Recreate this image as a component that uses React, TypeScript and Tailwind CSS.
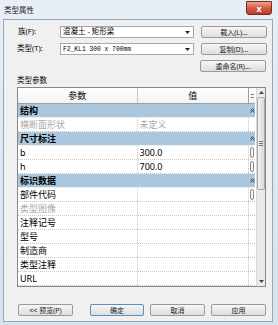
import React from "react";

type Row = { cat?: boolean; label: string; value?: string; grey?: boolean; btn?: boolean };

const rows: Row[] = [
  { cat: true, label: "结构" },
  { label: "横断面形状", value: "未定义", grey: true },
  { cat: true, label: "尺寸标注" },
  { label: "b", value: "300.0", btn: true },
  { label: "h", value: "700.0", btn: true },
  { cat: true, label: "标识数据" },
  { label: "部件代码", btn: true },
  { label: "类型图像", grey: true },
  { label: "注释记号" },
  { label: "型号" },
  { label: "制造商" },
  { label: "类型注释" },
  { label: "URL" },
  { label: "" },
];

function Collapse() {
  return (
    <svg width="5" height="5" viewBox="0 0 5 5" className="block">
      <path d="M0.5 2.5 L2.5 0.8 L4.5 2.5 M0.5 4.5 L2.5 2.8 L4.5 4.5" stroke="#333" strokeWidth="0.9" fill="none" />
    </svg>
  );
}

function Btn({ children, def, w }: { children: React.ReactNode; def?: boolean; w: string }) {
  return (
    <div
      className={`${w} h-[12px] flex items-center justify-center rounded-[2px] border ${
        def ? "border-[#5a8fc0]" : "border-[#9a9a9a]"
      } bg-gradient-to-b from-[#f6f6f6] to-[#dedede] text-[7px] text-[#222] leading-none`}
    >
      {children}
    </div>
  );
}

function Combo({ children }: { children: React.ReactNode }) {
  return (
    <div className="w-[134px] h-[12px] flex items-center border border-[#a6a9b0] bg-white pl-[2px] pr-[3px]">
      <div className="flex-1 leading-none">{children}</div>
      <svg width="5" height="3" viewBox="0 0 5 3">
        <path d="M0 0 L5 0 L2.5 3 Z" fill="#222" />
      </svg>
    </div>
  );
}

export default function App() {
  return (
    <div className="w-[278px] h-[325px] bg-gradient-to-b from-[#e7eef6] to-[#d6e2ee] flex flex-col overflow-hidden font-['Noto_Sans','Noto_Sans_CJK_SC',sans-serif] text-black">
      <div className="h-[19px] flex items-start justify-between pl-[4px] pr-[6px]">
        <div className="text-[7.5px] leading-none mt-[7px] text-[#1a1a1a]">类型属性</div>
        <div className="w-[26px] h-[14px] mt-[1px] rounded-b-[3px] border border-[#7a2a1c] bg-gradient-to-b from-[#e9a595] via-[#d45a44] to-[#c23a26] flex items-center justify-center">
          <span className="text-white text-[9px] font-bold leading-none">x</span>
        </div>
      </div>
      <div className="ml-[3px] w-[270px] h-[303px] border border-[#9aa6b3] bg-[#f0f0f0] flex flex-col pl-[13px] pr-[5px]">
        <div className="mt-[6px] flex flex-col gap-[5px] text-[7.5px]">
          <div className="flex items-center h-[12px]">
            <div className="w-[43px] pl-[1px] leading-none">族(F):</div>
            <Combo>混凝土 - 矩形梁</Combo>
            <div className="ml-[7px]">
              <Btn w="w-[66px]">载入(L)...</Btn>
            </div>
          </div>
          <div className="flex items-center h-[12px]">
            <div className="w-[43px] leading-none">类型(T):</div>
            <Combo>
              <span className="font-['Liberation_Mono',monospace] text-[6.3px]">F2_KL1 300 x 700mm</span>
            </Combo>
            <div className="ml-[7px]">
              <Btn w="w-[66px]">复制(D)...</Btn>
            </div>
          </div>
          <div className="flex items-center h-[12px] justify-end pr-[1px]">
            <Btn w="w-[66px]">重命名(R)...</Btn>
          </div>
        </div>
        <div className="mt-[3px] h-[10px] text-[7.5px] leading-[10px]">类型参数</div>
        <div className="mt-[2px] w-[249px] h-[200px] border border-[#828790] bg-white flex overflow-hidden">
          <div className="w-[238px] flex flex-col overflow-hidden">
            <div className="h-[16px] shrink-0 flex border-b border-[#a0a0a0] bg-gradient-to-b from-white to-[#f3f3f3] text-[9px]">
              <div className="w-[120px] border-r border-[#c8c8c8] flex items-center justify-center">参数</div>
              <div className="w-[112px] border-r border-[#a0a0a0] flex items-center justify-center">值</div>
              <div className="w-[6px] flex items-center justify-center">
                <div className="w-[3px] h-[4px] border-y border-[#777]" />
              </div>
            </div>
            {rows.map((r, i) =>
              r.cat ? (
                <div key={i} className="h-[14px] shrink-0 flex items-center bg-[#aac7dd] border-b border-[#f0f0f0]">
                  <div className="flex-1 pl-[2px] text-[9px] font-bold leading-none">{r.label}</div>
                  <div className="w-[6px] flex justify-center">
                    <Collapse />
                  </div>
                </div>
              ) : (
                <div key={i} className="h-[14px] shrink-0 flex border-b border-dotted border-[#c4c4c4] text-[9px]">
                  <div
                    className={`w-[120px] border-r border-dotted border-[#c4c4c4] pl-[2px] flex items-center leading-none ${
                      r.grey ? "text-[#a8a8a8]" : ""
                    }`}
                  >
                    {r.label}
                  </div>
                  <div
                    className={`w-[112px] border-r border-dotted border-[#c4c4c4] pl-[2px] flex items-center leading-none ${
                      r.grey ? "text-[#a8a8a8]" : ""
                    }`}
                  >
                    {r.value ?? ""}
                  </div>
                  <div className="w-[6px] flex items-center justify-center">
                    {r.btn ? <div className="w-[4px] h-[11px] rounded-[2px] border border-[#8a8a8a] bg-[#f4f4f4]" /> : null}
                  </div>
                </div>
              )
            )}
          </div>
          <div className="w-[9px] ml-[1px] bg-[#eaeaea] border-l border-[#d8d8d8] flex flex-col items-center">
            <div className="h-[9px] flex items-center justify-center">
              <svg width="5" height="3" viewBox="0 0 5 3">
                <path d="M0 3 L5 3 L2.5 0 Z" fill="#444" />
              </svg>
            </div>
            <div className="w-[8px] h-[93px] rounded-[2px] border border-[#a9a9a9] bg-gradient-to-r from-[#f2f2f2] to-[#dadada] flex flex-col items-center justify-center gap-[1px]">
              <div className="w-[4px] h-[1px] bg-[#777]" />
              <div className="w-[4px] h-[1px] bg-[#777]" />
              <div className="w-[4px] h-[1px] bg-[#777]" />
            </div>
            <div className="flex-1" />
            <div className="h-[9px] flex items-center justify-center">
              <svg width="5" height="3" viewBox="0 0 5 3">
                <path d="M0 0 L5 0 L2.5 3 Z" fill="#444" />
              </svg>
            </div>
          </div>
        </div>
        <div className="mt-[17px] flex items-center text-[7.5px]">
          <div className="ml-[1px]">
            <Btn w="w-[55px]">&lt;&lt; 预览(P)</Btn>
          </div>
          <div className="flex-1" />
          <div className="flex gap-[6px] pr-[1px]">
            <Btn w="w-[54px]" def>
              确定
            </Btn>
            <Btn w="w-[55px]">取消</Btn>
            <Btn w="w-[55px]">应用</Btn>
          </div>
        </div>
      </div>
    </div>
  );
}
